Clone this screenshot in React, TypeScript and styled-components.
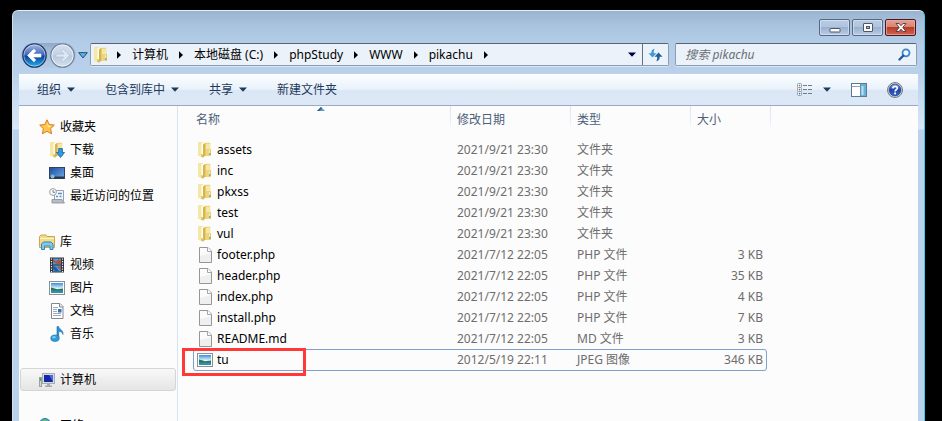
import React from "react";
import styled, { createGlobalStyle, css } from "styled-components";

const GlobalStyle = createGlobalStyle`
  * { box-sizing: border-box; }
  body {
    margin: 0;
    background: #000;
    font-family: "Noto Sans", "Noto Sans CJK SC", sans-serif;
    font-size: 12px;
    line-height: 16px;
    color: #000;
  }
  button, input { font: inherit; color: inherit; }
  button { padding: 0; margin: 0; border: 0; background: none; }
  svg { display: block; flex: none; }
`;

const Desktop = styled.div`
  height: 100vh;
  overflow: hidden;
  padding: 10px 17px 0 12px;
  background: #000;
`;

const Window = styled.main`
  display: flex;
  flex-direction: column;
  min-height: 100%;
  border: 1px solid #e4eef8;
  border-left-color: #d0dfef;
  border-right-color: #38cdf0;
  border-bottom: 0;
  border-radius: 6px 6px 0 0;
  padding: 0 6px;
  background: linear-gradient(#9ab4d0 0, #a9c3df 14px, #b3cde9 32px, #b9d0ea 60px, #d8e6f5 116px, #d8e6f5 118px, #bad2eb 119px, #bad2eb 100%);
`;

const TitleBar = styled.header`
  display: flex;
  justify-content: flex-end;
  gap: 2px;
  height: 32px;
  padding: 8px 2px 0 0;
`;

const CaptionButton = styled.button<{ $danger?: boolean }>`
  display: grid;
  place-items: center;
  width: 31px;
  height: 17px;
  border: 1px solid #586a83;
  border-radius: 2px;
  box-shadow: inset 0 0 0 1px #dbe7f4a8;
  background: linear-gradient(#b9cce3 0, #afc4de 45%, #9bb2cf 50%, #b5cbe5 100%);
  ${(p) =>
    p.$danger &&
    css`
      border-color: #4a1720;
      box-shadow: inset 0 0 0 1px #e9b0a4b0;
      background: linear-gradient(#e2a193 0, #d98573 45%, #b93c27 50%, #cf6650 100%);
    `}
`;

const NavBar = styled.nav`
  display: flex;
  align-items: flex-start;
  height: 31px;
  padding: 0 1px 0 2px;
`;

const HistoryButtons = styled.div`
  display: flex;
  align-items: center;
  gap: 3px;
  height: 25px;
  padding: 0 1px;
  border-radius: 13px;
  background: linear-gradient(#8fa9c8 0, #a5bcd8 30%, #b5cbe5 100%);
`;

const HistoryButton = styled.button`
  width: 25px;
  height: 25px;
`;

const RecentButton = styled.button`
  display: grid;
  place-items: center;
  width: 14px;
  height: 24px;
`;

const field = css`
  display: flex;
  align-items: center;
  height: 23px;
  border: 1px solid #8d9db0;
  border-top-color: #59636f;
  border-radius: 2px;
  background: #ebf2fa;
  box-shadow: 0 1px 0 #d6e4f3;
`;

const AddressBar = styled.div`
  ${field}
  flex: 1 1 580px;
  min-width: 0;
  padding-left: 2px;
`;

const Crumbs = styled.ol`
  display: flex;
  align-items: center;
  flex: 1;
  min-width: 0;
  margin: 0;
  padding: 0 0 0 8px;
  list-style: none;
  overflow: hidden;
  white-space: nowrap;
`;

const Crumb = styled.li`
  display: flex;
  align-items: center;
  gap: 11px;
  padding-left: 11px;
`;

const CrumbLink = styled.a`
  color: #000;
  text-decoration: none;
`;

const FieldButton = styled.button<{ $divided?: boolean }>`
  display: grid;
  place-items: center;
  width: ${(p) => (p.$divided ? 26 : 20)}px;
  height: 21px;
  border-left: ${(p) => (p.$divided ? "1px solid #65707d" : "0")};
`;

const SearchBox = styled.div`
  ${field}
  flex: 0 1 242px;
  min-width: 0;
  margin-left: 6px;
  padding-right: 2px;
`;

const SearchInput = styled.input`
  flex: 1;
  min-width: 0;
  padding: 0 0 0 9px;
  border: 0;
  outline: 0;
  background: transparent;
  &::placeholder {
    color: #6c7075;
    font-style: italic;
    opacity: 1;
  }
`;

const Toolbar = styled.div`
  display: flex;
  align-items: center;
  height: 32px;
  padding: 0 15px 1px 18px;
  border-top: 1px solid #fff;
  border-bottom: 1px solid #9baac6;
  background: linear-gradient(#fafdff 0, #e9f2fb 48%, #dce7f5 50%, #dde8f6 100%);
  color: #1e395b;
`;

const Commands = styled.div`
  display: flex;
  gap: 30px;
  flex: 1;
`;

const Command = styled.button<{ $wide?: boolean }>`
  display: flex;
  align-items: center;
  gap: ${(p) => (p.$wide ? 10 : 6)}px;
  white-space: nowrap;
`;

const ViewButtons = styled.div`
  display: flex;
  align-items: center;
  gap: 20px;
`;

const Body = styled.div`
  display: flex;
  flex: 1;
  background: #fcfcfc;
`;

const Sidebar = styled.aside`
  display: flex;
  flex-direction: column;
  gap: 23px;
  flex: none;
  width: 159px;
  padding: 9px 1px 0;
  border-right: 1px solid #d9e4f1;
`;

const PlaceLink = styled.a<{ $child?: boolean; $current?: boolean }>`
  display: flex;
  align-items: center;
  gap: 5px;
  height: 23px;
  padding-left: ${(p) => (p.$child ? 28 : 18)}px;
  border: 1px solid ${(p) => (p.$current ? "#d5d5d5" : "transparent")};
  border-radius: 3px;
  background: ${(p) => (p.$current ? "linear-gradient(#f8f8f8, #e5e5e5)" : "none")};
  color: #000;
  text-decoration: none;
  white-space: nowrap;
`;

const FilePane = styled.section`
  flex: 1;
  min-width: 0;
  padding-left: 15px;
`;

const FileTable = styled.table`
  width: 574px;
  table-layout: fixed;
  border-spacing: 0;
`;

const HeadCell = styled.th<{ $width: number }>`
  position: relative;
  width: ${(p) => p.$width}px;
  height: 33px;
  padding: 0 0 5px 6px;
  color: #4c607a;
  font-weight: 400;
  text-align: left;
  &:first-child { padding-left: 3px; }
  &::after {
    content: "";
    position: absolute;
    top: 0;
    right: 0;
    width: 1px;
    height: 23px;
    background: linear-gradient(#d5e5f5, #e6f0fa 70%, #fcfcfc);
  }
  &:last-child::after { right: -4px; }
`;

const SortMark = styled.svg`
  position: absolute;
  top: 1px;
  left: calc(50% - 5px);
`;

const FileRow = styled.tr<{ $focused?: boolean }>`
  height: ${(p) => (p.$focused ? 22 : 21)}px;
  ${(p) =>
    p.$focused &&
    css`
      outline: 1px solid #7da2ce;
      outline-offset: -1px;
      border-radius: 3px;
    `}
`;

const Cell = styled.td<{ $end?: boolean }>`
  padding: ${(p) => (p.$end ? "0 4px 0 0" : "0 0 0 6px")};
  color: #6d6d6d;
  text-align: ${(p) => (p.$end ? "right" : "left")};
  white-space: nowrap;
`;

const NameCell = styled.td`
  position: relative;
  padding: 0 0 0 4px;
  color: #000;
`;

const FileName = styled.div`
  display: flex;
  align-items: center;
  gap: 4px;
`;

const Highlight = styled.div`
  position: absolute;
  top: -1px;
  left: -11px;
  width: 124px;
  height: 28px;
  border: 3px solid #ff3838;
  pointer-events: none;
`;

const Caret = ({ color = "#1e395b" }: { color?: string }) => (
  <svg width="8" height="5" viewBox="0 0 8 5">
    <path d="M0 0.5h8L4 4.7z" fill={color} />
  </svg>
);

const CrumbArrow = () => (
  <svg width="4" height="8" viewBox="0 0 4 8">
    <path d="M0 0.3L4 4 0 7.7z" fill="#000" />
  </svg>
);

const MinimizeGlyph = () => (
  <svg width="12" height="11" viewBox="0 0 12 11">
    <rect x="1" y="6.5" width="10" height="3.5" rx="0.5" fill="#fafafa" stroke="#4c5768" />
  </svg>
);

const MaximizeGlyph = () => (
  <svg width="12" height="11" viewBox="0 0 12 11">
    <rect x="1.5" y="1.5" width="9" height="8" rx="0.5" fill="#fafafa" stroke="#4c5768" />
    <rect x="4.5" y="4.5" width="3" height="2" fill="#9fb5d0" stroke="#4c5768" />
  </svg>
);

const CloseGlyph = () => (
  <svg width="12" height="11" viewBox="0 0 12 11">
    <path d="M1 1.5h3L6 3.7l2-2.2h3L7.8 5.4 11 9.5H8L6 7.2 4 9.5H1l3.2-4.1z" fill="#fafafa" stroke="#4f3840" strokeWidth="0.9" />
  </svg>
);

const HistoryGlyph = ({ forward }: { forward?: boolean }) => {
  const id = forward ? "orb-forward" : "orb-back";
  return (
    <svg width="25" height="25" viewBox="0 0 25 25">
      <defs>
        <linearGradient id={id} x2="0" y2="1">
          <stop offset="0" stopColor={forward ? "#d5e0ed" : "#a9bce6"} />
          <stop offset="0.48" stopColor={forward ? "#c3d2e5" : "#3d66b8"} />
          <stop offset="0.52" stopColor={forward ? "#b8cade" : "#0b3f99"} />
          <stop offset="1" stopColor={forward ? "#d3e1f0" : "#28b5f0"} />
        </linearGradient>
      </defs>
      <circle cx="12.5" cy="12.5" r="11.7" fill={`url(#${id})`} stroke={forward ? "#6f819a" : "#1e3766"} strokeWidth="1.2" />
      <circle cx="12.5" cy="12.5" r="10.6" fill="none" stroke="#ffffff" strokeOpacity={forward ? 0.6 : 0.45} />
      <path
        d="M5.6 12.5l6.2-6.3 2 1.9-3 3H19v2.9h-8.2l3 3-2 1.8z"
        transform={forward ? "matrix(-1 0 0 1 25 0)" : undefined}
        fill={forward ? "#dfe8f2" : "#fff"}
        stroke={forward ? "#b2c2d6" : "#fff"}
        strokeWidth="0.7"
      />
    </svg>
  );
};

const RecentGlyph = () => (
  <svg width="10" height="7" viewBox="0 0 10 7">
    <path d="M0.7 0.7h8.6L5 5.9z" fill="#5fb4dc" stroke="#1b4877" />
  </svg>
);

const RefreshGlyph = () => (
  <svg width="15" height="14" viewBox="0 0 15 14">
    <path d="M6.8 0.8C4.2 1 3.2 3 3.3 5.2H0.5l4 4.2 4-4.2H5.8C5.6 3.6 5.8 2.1 6.8 0.8z" fill="#3f97d3" />
    <path d="M8.2 13.2c2.6-.2 3.5-2.1 3.5-4.400h2.800l-4-4.200-4 4.200h2.600c.2 1.800 0 3.100-.9 4.400z" fill="#215e9f" />
  </svg>
);

const SearchGlyph = () => (
  <svg width="13" height="13" viewBox="0 0 13 13">
    <circle cx="8" cy="4.8" r="3.5" fill="#f3f9ff" stroke="#3c86c9" strokeWidth="1.8" />
    <path d="M5.3 7.6L1.5 11.5" stroke="#2458a0" strokeWidth="2.3" strokeLinecap="round" />
  </svg>
);

const ViewGlyph = () => (
  <svg width="16" height="13" viewBox="0 0 16 13">
    {["#4d9a58", "#c63a3a", "#3168b5"].map((c, i) => (
      <g key={c} transform={`translate(0 ${i * 4})`}>
        <rect x="0.5" y="0.5" width="4" height="4" rx="1" fill="#fff" stroke="#8d9cb0" />
        <rect x="1.8" y="1.8" width="1.5" height="1.5" fill={c} />
        <path d="M6 2.5h4M11 2.5h4" stroke="#6e7e92" />
      </g>
    ))}
  </svg>
);

const PaneGlyph = () => (
  <svg width="16" height="14" viewBox="0 0 16 14">
    <rect x="0.5" y="0.5" width="15" height="13" fill="#fff" stroke="#5d7896" />
    <path d="M1 3.5h9" stroke="#8fa3ba" />
    <rect x="10" y="1" width="5" height="12" fill="#65b5db" />
    <path d="M11.5 3v9" stroke="#b5e3f4" strokeWidth="2" />
    <path d="M9.5 1v12" stroke="#6f8ca8" />
  </svg>
);

const HelpGlyph = () => (
  <svg width="16" height="16" viewBox="0 0 16 16">
    <defs>
      <linearGradient id="help-fill" x2="0" y2="1">
        <stop offset="0" stopColor="#7d9fe4" />
        <stop offset="0.5" stopColor="#1e42ac" />
        <stop offset="1" stopColor="#3471d4" />
      </linearGradient>
    </defs>
    <circle cx="8" cy="8" r="7.5" fill="#d4d8de" stroke="#747b86" />
    <circle cx="8" cy="8" r="5.9" fill="url(#help-fill)" stroke="#27386f" strokeWidth="0.7" />
    <path d="M5.8 6.4C5.9 3.5 10.4 3.7 10.3 6.2 10.2 7.7 8.1 7.9 8.1 9.5" fill="none" stroke="#fff" strokeWidth="1.7" />
    <rect x="7.2" y="10.5" width="1.8" height="1.8" fill="#fff" />
  </svg>
);

const FolderShapes = () => (
  <>
    <path d="M1 .8L1.500 .3H6v14.500L1 13.800z" fill="#f2df8c" />
    <path d="M7 1.500L8 .8h5.300v6.700h.7V13l-1 1H7z" fill="#eed578" />
    <path d="M9 2h4v5H9z" fill="#f6e7a4" />
    <path d="M12.800 7.500H14v6h-1.200z" fill="#e0bd4c" />
    <path d="M12.300 8h.9v3h-.9z" fill="#fff8da" />
    <path d="M12.300 11h.9v2h-.9z" fill="#5aa1b4" />
    <path d="M4.200 1.200h2V12h-2z" fill="#fffdf0" />
    <path d="M1 1l3.200.8v13L1 13.600z" fill="#f5e8a6" />
    <path d="M6 2.500L8.300 1v12.500L6 15.800z" fill="#d5b454" />
    <path d="M4.200 12L6 13v2.800l-1.800-1z" fill="#dcc069" />
  </>
);

const FolderIcon = () => (
  <svg width="16" height="16" viewBox="0 0 16 16">
    <FolderShapes />
  </svg>
);

const DocIcon = () => (
  <svg width="16" height="16" viewBox="0 0 16 16">
    <path d="M2.5 0.5h8.500l3.500 3.500v11.500h-12z" fill="#fbfbfb" stroke="#969696" />
    <path d="M3 15V9l11-3v9z" fill="#efefef" />
    <path d="M10.5 0.5v4h4" fill="#fff" stroke="#a5a5a5" />
  </svg>
);

const PictureIcon = () => (
  <svg width="16" height="16" viewBox="0 0 16 16">
    <defs>
      <linearGradient id="sky" x2="0" y2="1">
        <stop offset="0" stopColor="#3b8fd8" />
        <stop offset="0.55" stopColor="#e4f5fb" />
        <stop offset="1" stopColor="#e4f5fb" />
      </linearGradient>
    </defs>
    <rect x="0.5" y="1.5" width="15" height="13" fill="#fff" stroke="#8b9096" />
    <rect x="2" y="3" width="12" height="10" fill="url(#sky)" />
    <path d="M2 7.500l3 .8 3 1 6-.8V11H2z" fill="#2b7557" />
    <path d="M2 10.500h12V13H2z" fill="#2e8fb0" />
  </svg>
);

const StarIcon = () => (
  <svg width="16" height="16" viewBox="0 0 16 16">
    <path d="M8 .8l2.200 4.700 5.100.6-3.700 3.600 1 5.100L8 12.300l-4.600 2.500 1-5.100L.7 6.100l5.100-.6z" fill="#ffc64b" stroke="#dd7a22" />
    <path d="M8 3l1.300 3.500 3 .5L9 8.500z" fill="#fff0ae" />
  </svg>
);

const DownloadIcon = () => (
  <svg width="16" height="16" viewBox="0 0 16 16">
    <FolderShapes />
    <path d="M9.700 6.500h3.600v4h2.200l-4 5-4-5h2.200z" fill="#2e9be8" stroke="#1561a4" strokeWidth="0.8" />
  </svg>
);

const DesktopIcon = () => (
  <svg width="16" height="16" viewBox="0 0 16 16">
    <defs>
      <linearGradient id="desk" x2="1" y2="1">
        <stop offset="0" stopColor="#1b4b9f" />
        <stop offset="1" stopColor="#72abe7" />
      </linearGradient>
    </defs>
    <rect x="0.5" y="2.5" width="15" height="11" fill="url(#desk)" stroke="#33425c" />
    <path d="M1 12.500h14" stroke="#26364f" strokeWidth="2" />
    <circle cx="3.5" cy="11.5" r="2" fill="#68c7f3" />
    <path d="M2.500 10.500h1v1h-1z" fill="#ef7042" />
    <path d="M3.700 11.600h1v1h-1z" fill="#f5dc50" />
  </svg>
);

const RecentIcon = () => (
  <svg width="16" height="16" viewBox="0 0 16 16">
    <path d="M5.500 2.500h9v10h-9z" fill="#f6f7f9" stroke="#98a0aa" />
    <path d="M3 11.500h10l2.500 3.500H3z" fill="#b7bdc5" stroke="#868d96" strokeWidth="0.8" />
    <path d="M9 5.500h4M7 8.500h2M10.500 8.500h2" stroke="#4b96cf" strokeWidth="1.5" />
    <circle cx="4" cy="4" r="3.4" fill="#fafafa" stroke="#9aa0a8" />
    <path d="M4 2v2.300h2" stroke="#6a7178" fill="none" strokeWidth="0.9" />
  </svg>
);

const LibraryIcon = () => (
  <svg width="16" height="16" viewBox="0 0 16 16">
    <path d="M.5 2.500L2 1h5l1 1.500h7.500v11H.5z" fill="#f1db86" stroke="#c8a952" />
    <path d="M1 4.500h14" stroke="#fff5c7" />
    <path d="M2.500 15.500V10l2-2h7.500l2 2v5.500h-3V12h-5.500v3.500z" fill="#7fc9ef" stroke="#3685b5" />
  </svg>
);

const VideoIcon = () => (
  <svg width="16" height="16" viewBox="0 0 16 16">
    <rect x="1" y="0.5" width="14" height="15" fill="#303236" />
    <path d="M4 1.500h8v6H4zM4 8.500h8v6H4z" fill="#4e9adb" />
    <path d="M4 2l3 2.500L10 2l2 2v3H8L4 5zM8 10l4-1v4z" fill="#a6574a" />
    <path d="M4 9l3 1 3 4H6l-2-2z" fill="#1f5ea9" />
    <path d="M2.500 1.500v14M13.500 1.500v14" stroke="#f2f2f2" strokeWidth="1.2" strokeDasharray="1.2 1.3" />
  </svg>
);

const TextIcon = () => (
  <svg width="16" height="16" viewBox="0 0 16 16">
    <path d="M2.500 .5h8.500l3 3v12H2.500z" fill="#fff" stroke="#83878d" />
    <path d="M10.500 .5v3.500H14" fill="#e8ebee" stroke="#83878d" />
    <path d="M4 4.500h5M4 6.500h4M4 8.500h4M4 10.500h8M4 12.500h8" stroke="#a0a9bb" />
    <rect x="9" y="6" width="3.5" height="3.5" fill="#2e76b8" />
  </svg>
);

const MusicIcon = () => (
  <svg width="16" height="16" viewBox="0 0 16 16">
    <path d="M8 .5h1.500c.5 2.500 5 3.500 4.500 8-.5-2-2-3-4.300-3.200V12H8z" fill="#2b91d8" stroke="#1669a9" strokeWidth="0.6" />
    <ellipse cx="6" cy="12.2" rx="4.2" ry="3.2" fill="#2f9be1" stroke="#1669a9" strokeWidth="0.6" />
    <ellipse cx="5" cy="11.3" rx="1.8" ry="1" fill="#8ad0f7" />
  </svg>
);

const ComputerIcon = () => (
  <svg width="16" height="16" viewBox="0 0 16 16">
    <rect x="0.5" y="5.500" width="2" height="9" fill="#d5d8dc" stroke="#9ba2a9" />
    <path d="M1.500 6v3" stroke="#49af4c" strokeWidth="1.500" />
    <rect x="3.5" y="1.5" width="12" height="10" fill="#d8dbe0" stroke="#a6adb5" />
    <rect x="5" y="3" width="9" height="7" fill="#1327a8" />
    <path d="M10 3h4v7z" fill="#486be0" />
    <path d="M8 12h3v1.500h2V15H6v-1.500h2z" fill="#a6abb3" />
  </svg>
);

const NetworkIcon = () => (
  <svg width="16" height="16" viewBox="0 0 16 16">
    <circle cx="6" cy="6" r="5.5" fill="#43a6df" stroke="#2c75aa" />
    <path d="M2 4c2-3 5-3 6-2L6 5 3 6zM7 6l4-1v4L8 10z" fill="#5fc65a" />
    <rect x="6.5" y="8.5" width="9" height="6" fill="#1b35b0" stroke="#a9b0ba" />
  </svg>
);

const crumbs = ["计算机", "本地磁盘 (C:)", "phpStudy", "WWW", "pikachu"];

const commands = [
  { label: "组织", menu: true },
  { label: "包含到库中", menu: true },
  { label: "共享", menu: true },
  { label: "新建文件夹", menu: false },
];

const placeGroups = [
  [
    { label: "收藏夹", Icon: StarIcon },
    { label: "下载", Icon: DownloadIcon },
    { label: "桌面", Icon: DesktopIcon },
    { label: "最近访问的位置", Icon: RecentIcon },
  ],
  [
    { label: "库", Icon: LibraryIcon },
    { label: "视频", Icon: VideoIcon },
    { label: "图片", Icon: PictureIcon },
    { label: "文档", Icon: TextIcon },
    { label: "音乐", Icon: MusicIcon },
  ],
  [{ label: "计算机", Icon: ComputerIcon, current: true }],
  [{ label: "网络", Icon: NetworkIcon }],
] as { label: string; Icon: React.FC; current?: boolean }[][];

const folders = ["assets", "inc", "pkxss", "test", "vul"].map((name) => ({
  name,
  date: "2021/9/21 23:30",
  type: "文件夹",
  size: "",
  Icon: FolderIcon,
  focused: false,
}));

const phpFiles = [
  ["footer.php", "PHP 文件", "3 KB"],
  ["header.php", "PHP 文件", "35 KB"],
  ["index.php", "PHP 文件", "4 KB"],
  ["install.php", "PHP 文件", "7 KB"],
  ["README.md", "MD 文件", "3 KB"],
].map(([name, type, size]) => ({ name, date: "2021/7/12 22:05", type, size, Icon: DocIcon, focused: false }));

const files = [
  ...folders,
  ...phpFiles,
  { name: "tu", date: "2012/5/19 22:11", type: "JPEG 图像", size: "346 KB", Icon: PictureIcon, focused: true },
];

export default function App() {
  return (
    <Desktop>
      <GlobalStyle />
      <Window>
        <TitleBar>
          <CaptionButton aria-label="最小化"><MinimizeGlyph /></CaptionButton>
          <CaptionButton aria-label="最大化"><MaximizeGlyph /></CaptionButton>
          <CaptionButton aria-label="关闭" $danger><CloseGlyph /></CaptionButton>
        </TitleBar>

        <NavBar>
          <HistoryButtons>
            <HistoryButton aria-label="后退"><HistoryGlyph /></HistoryButton>
            <HistoryButton aria-label="前进"><HistoryGlyph forward /></HistoryButton>
          </HistoryButtons>
          <RecentButton aria-label="最近的页面"><RecentGlyph /></RecentButton>
          <AddressBar>
            <FolderIcon />
            <Crumbs>
              <li><CrumbArrow /></li>
              {crumbs.map((name) => (
                <Crumb key={name}>
                  <CrumbLink href="#">{name}</CrumbLink>
                  <CrumbArrow />
                </Crumb>
              ))}
            </Crumbs>
            <FieldButton aria-label="以前的位置"><Caret color="#000040" /></FieldButton>
            <FieldButton aria-label="刷新" $divided><RefreshGlyph /></FieldButton>
          </AddressBar>
          <SearchBox>
            <SearchInput type="text" aria-label="搜索" placeholder="搜索 pikachu" />
            <FieldButton aria-label="开始搜索"><SearchGlyph /></FieldButton>
          </SearchBox>
        </NavBar>

        <Toolbar>
          <Commands>
            {commands.map((c) => (
              <Command key={c.label}>
                {c.label}
                {c.menu && <Caret />}
              </Command>
            ))}
          </Commands>
          <ViewButtons>
            <Command aria-label="更改视图" $wide>
              <ViewGlyph />
              <Caret />
            </Command>
            <Command aria-label="预览窗格"><PaneGlyph /></Command>
            <Command aria-label="帮助"><HelpGlyph /></Command>
          </ViewButtons>
        </Toolbar>

        <Body>
          <Sidebar>
            {placeGroups.map((group) => (
              <div key={group[0].label}>
                {group.map(({ label, Icon, current }, i) => (
                  <PlaceLink key={label} href="#" $child={i > 0} $current={current}>
                    <Icon />
                    {label}
                  </PlaceLink>
                ))}
              </div>
            ))}
          </Sidebar>
          <FilePane>
            <FileTable>
              <thead>
                <tr>
                  <HeadCell $width={258}>
                    名称
                    <SortMark width="8" height="4" viewBox="0 0 8 4">
                      <path d="M0 4L4 0l4 4z" fill="#5b9cc0" />
                      <path d="M0 4L4 0l1 1-2.500 3z" fill="#2f5f82" />
                    </SortMark>
                  </HeadCell>
                  <HeadCell $width={120}>修改日期</HeadCell>
                  <HeadCell $width={120}>类型</HeadCell>
                  <HeadCell $width={76}>大小</HeadCell>
                </tr>
              </thead>
              <tbody>
                {files.map(({ name, date, type, size, Icon, focused }) => (
                  <FileRow key={name} $focused={focused}>
                    <NameCell>
                      <FileName>
                        <Icon />
                        {name}
                      </FileName>
                      {focused && <Highlight />}
                    </NameCell>
                    <Cell>{date}</Cell>
                    <Cell>{type}</Cell>
                    <Cell $end>{size}</Cell>
                  </FileRow>
                ))}
              </tbody>
            </FileTable>
          </FilePane>
        </Body>
      </Window>
    </Desktop>
  );
}
